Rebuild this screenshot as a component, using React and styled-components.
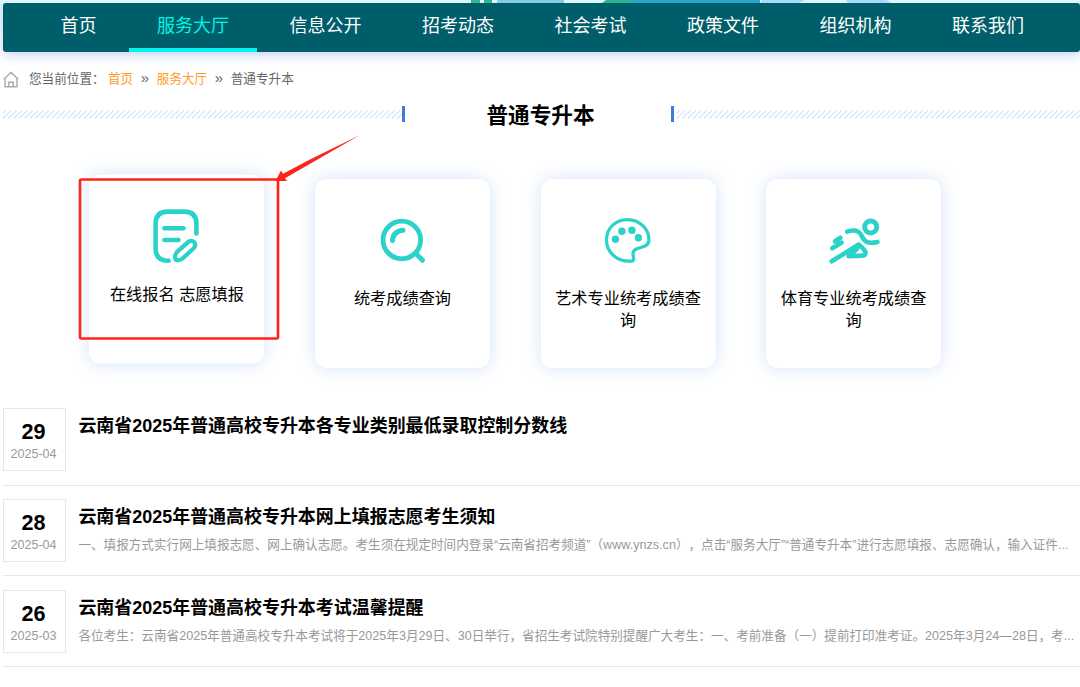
import React from 'react';
import styled, { createGlobalStyle } from 'styled-components';

const GlobalStyle = createGlobalStyle`
  * {
    box-sizing: border-box;
  }

  body {
    margin: 0;
    background: #fff;
    overflow: hidden;
    font-family: 'Liberation Sans', 'Noto Sans CJK SC', sans-serif;
    text-spacing-trim: space-all;
    color: #000;
  }
`;

const Page = styled.div`
  position: relative;
  width: 1080px;
  height: 687px;
  overflow: hidden;
`;

const Banner = styled.svg`
  display: block;
`;

const NavShadow = styled.div`
  background: linear-gradient(#e2f6fb, #fff);
  padding-left: 3px;
`;

const Nav = styled.nav`
  display: flex;
  gap: 4.5px;
  height: 49px;
  padding-left: 29.5px;
  background: #005e6b;
  border-radius: 3px;
  box-shadow: 0 3px 12px rgba(60, 110, 210, 0.3);
`;

const NavItem = styled.a`
  padding: 0 28px;
  height: 49px;
  line-height: 47px;
  font-size: 18px;
  white-space: nowrap;
  color: ${props => (props.$active ? '#00f5e6' : '#fff')};
  border-bottom: 4px solid ${props => (props.$active ? '#00f5ee' : 'transparent')};
`;

const Breadcrumb = styled.div`
  display: flex;
  align-items: center;
  height: 20px;
  margin-top: 15px;
  padding-left: 3px;
  font-size: 12.6px;
  color: #666;
  white-space: nowrap;
`;

const HomeIcon = styled.svg`
  margin: 4px 10px 0 0;
`;

const Place = styled.span`
  width: 79px;
`;

const CrumbLink = styled.a`
  color: #ff9c26;
`;

const Separator = styled.span`
  width: 23.6px;
  text-align: center;
  font-size: 15px;
`;

const TitleRow = styled.div`
  display: flex;
  align-items: center;
  height: 32px;
  margin-top: 11px;
  padding-left: 3px;
`;

const Hatch = styled.svg`
  flex: ${props => (props.$width ? 'none' : '1')};
  width: ${props => props.$width || 'auto'};
  height: 9px;
`;

const SectionTitle = styled.h2`
  display: flex;
  align-items: center;
  justify-content: center;
  width: 272px;
  height: 16px;
  margin: 0 3px 0 0;
  padding-left: 5px;
  border: solid #3a7de0;
  border-width: 0 3px;
  font-size: 21.6px;
  line-height: 18px;
  padding-top: 3px;
`;

const CardRow = styled.div`
  display: flex;
  gap: 50.55px;
  margin-top: 48.5px;
  padding-left: 89.45px;
`;

const Card = styled.div`
  width: 175px;
  height: 189.5px;
  padding: 33px 13px 0;
  border-radius: 12px;
  background: #fff;
  box-shadow: 0 0 18px rgba(60, 130, 225, 0.22);
  text-align: center;
  transform: translateY(${props => (props.$raised ? '-4.5px' : '0')});
`;

const CardIcon = styled.svg`
  display: block;
  margin: 0 auto;
  fill: none;
  stroke: #2ad2c9;
  stroke-linecap: round;
  stroke-linejoin: round;
`;

const CardLabel = styled.div`
  margin-top: 15px;
  font-size: 16.2px;
  line-height: 22px;
`;

const NewsList = styled.div`
  margin-top: 40px;
  padding-left: 3px;
`;

const NewsItem = styled.div`
  display: flex;
  height: 90.7px;
  border-bottom: 1px solid #e6e6e6;
  padding-top: 13.3px;

  &:first-child {
    height: 77.7px;
    padding-top: 0;
  }
`;

const DateBox = styled.div`
  width: 63px;
  height: 63px;
  padding-top: 11px;
  border: 1px solid #e6e6e6;
  text-align: center;
`;

const Day = styled.div`
  margin-left: -2px;
  font-size: 21.6px;
  line-height: 24px;
  font-weight: bold;
`;

const Month = styled.div`
  margin-left: -2px;
  font-size: 12.6px;
  line-height: 21px;
  color: #999;
`;

const NewsBody = styled.div`
  flex: 1;
  min-width: 0;
  padding: 5px 3px 0 12.4px;
`;

const NewsTitle = styled.h3`
  margin: 0;
  font-size: 17.97px;
  line-height: 27px;
`;

const Summary = styled.p`
  margin: 4px 0 0;
  font-size: 12.6px;
  line-height: 21px;
  color: #999;
  white-space: nowrap;
  overflow: hidden;
  text-overflow: ellipsis;
`;

const Annotation = styled.svg`
  position: absolute;
  left: 70px;
  top: 130px;
`;

const navItems = ['首页', '服务大厅', '信息公开', '招考动态', '社会考试', '政策文件', '组织机构', '联系我们'];

const FormIcon = () => (
  <CardIcon width="60" height="60" viewBox="5 0.5 60 60" strokeWidth="4.6">
    <path d="M54.4 26.5V17Q54.4 4.6 42.4 4.6H25.6Q13.6 4.6 13.6 17V41.5Q13.6 53.8 26.6 53.8" />
    <path d="M22.4 21.2H41.5M22.4 33H36.4" />
    <path d="M34.6 45.4L46.6 34.6Q49.8 32.8 52.3 35.2Q54.4 38 51.9 41L40.4 51.6Q38.4 53.2 35.4 53.4Q33.1 53.2 33 50.2Q33.1 47 34.6 45.4Z" strokeWidth="4.2" />
  </CardIcon>
);

const SearchIcon = () => (
  <CardIcon width="60" height="60" viewBox="-0.5 0 60 60" strokeWidth="4.8">
    <circle cx="29.3" cy="28" r="18.8" />
    <path d="M43.5 41.6L50 48.2" />
    <path d="M20 28.5Q20.5 19.5 30.5 18.3" strokeWidth="5" />
  </CardIcon>
);

const PaletteIcon = () => (
  <CardIcon width="60" height="60" viewBox="0 0 60 60" strokeWidth="3.2">
    <path d="M35 48.8C19 51 8.5 40 8.5 28C8.5 15.7 18 7.6 29.5 7.6C42 7.6 52 18 50.8 29.5Q50 32.8 46.5 34.2L39 36.8Q34.8 38.3 35 42.2L35.6 46.5Q35.7 48.5 35 48.8Z" />
    <g fill="#2ad2c9" stroke="none">
      <circle cx="17.4" cy="27.3" r="3.7" />
      <circle cx="23.9" cy="19.2" r="3.7" />
      <circle cx="33.9" cy="18.3" r="3.7" />
      <circle cx="40.4" cy="25.8" r="3.7" />
    </g>
  </CardIcon>
);

const RunnerIcon = () => (
  <CardIcon width="60" height="60" viewBox="0 0 60 60" strokeWidth="4.6">
    <circle cx="46.7" cy="15" r="6" strokeWidth="5" />
    <path d="M23.2 19.7C31 17 35 19 37.2 23C40 29 42.5 32.5 53.5 30" />
    <path d="M7.8 49.3L34.7 32.5Q40.7 37.5 41.6 40.5Q41.5 43.5 38.3 43.6L24.6 44.2L33 37" />
    <path d="M8.3 36.2L17.6 30.6M11 29.2L16.4 25.7" />
  </CardIcon>
);

const cards = [
  { label: '在线报名 志愿填报', Icon: FormIcon, raised: true },
  { label: '统考成绩查询', Icon: SearchIcon },
  { label: '艺术专业统考成绩查询', Icon: PaletteIcon },
  { label: '体育专业统考成绩查询', Icon: RunnerIcon },
];

const news = [
  { day: '29', month: '2025-04', title: '云南省2025年普通高校专升本各专业类别最低录取控制分数线' },
  {
    day: '28',
    month: '2025-04',
    title: '云南省2025年普通高校专升本网上填报志愿考生须知',
    summary: '一、填报方式实行网上填报志愿、网上确认志愿。考生须在规定时间内登录“云南省招考频道”（www.ynzs.cn），点击“服务大厅”“普通专升本”进行志愿填报、志愿确认，输入证件...',
  },
  {
    day: '26',
    month: '2025-03',
    title: '云南省2025年普通高校专升本考试温馨提醒',
    summary: '各位考生：云南省2025年普通高校专升本考试将于2025年3月29日、30日举行，省招生考试院特别提醒广大考生：一、考前准备（一）提前打印准考证。2025年3月24—28日，考...',
  },
];

const Stripes = ({ id, width }) => (
  <Hatch $width={width}>
    <defs>
      <pattern id={id} width="5.4" height="9" patternUnits="userSpaceOnUse">
        <path d="M0 8.5L8 0.5M-5.4 8.5L2.6 0.5" stroke="#c3daf8" strokeWidth="1" />
      </pattern>
    </defs>
    <rect width="100%" height="9" fill={`url(#${id})`} />
  </Hatch>
);

const App = () => {
  return (
    <Page>
      <GlobalStyle />
      <Banner width="1080" height="3" viewBox="0 0 1080 3">
        <rect width="1080" height="3" fill="#dcf6fb" />
        <path d="M471 0h9v3h-9zM484 0h8v3h-8z" fill="#2db89b" />
        <path d="M497 0h67v3h-67z" fill="#86cbe6" />
        <path d="M606 0h34l-8 3h-30z" fill="#2db38f" />
        <path d="M635 0h125v3H628z" fill="#2aa5d2" />
        <path d="M762 0h43l-6 3h-39zM846 0h40l6 3h-44z" fill="#a8d8fa" />
      </Banner>
      <NavShadow>
        <Nav>
          {navItems.map(item => (
            <NavItem key={item} $active={item === '服务大厅'}>{item}</NavItem>
          ))}
        </Nav>
      </NavShadow>
      <Breadcrumb>
        <HomeIcon width="16" height="17" viewBox="0 0 16 17" fill="none" stroke="#aaa" strokeWidth="1.4" strokeLinejoin="round">
          <path d="M0.8 8.2L8 1.2L15.2 8.2M2 7.5V15.7H14V7.5M5.8 15.5V11.2H10.2V15.5" />
        </HomeIcon>
        <Place>您当前位置：</Place>
        <CrumbLink>首页</CrumbLink>
        <Separator>»</Separator>
        <CrumbLink>服务大厅</CrumbLink>
        <Separator>»</Separator>
        <span>普通专升本</span>
      </Breadcrumb>
      <TitleRow>
        <Stripes id="hatch-left" width="399px" />
        <SectionTitle>普通专升本</SectionTitle>
        <Stripes id="hatch-right" />
      </TitleRow>
      <CardRow>
        {cards.map(({ label, Icon, raised }) => (
          <Card key={label} $raised={raised}>
            <Icon />
            <CardLabel>{label}</CardLabel>
          </Card>
        ))}
      </CardRow>
      <NewsList>
        {news.map(item => (
          <NewsItem key={item.title}>
            <DateBox>
              <Day>{item.day}</Day>
              <Month>{item.month}</Month>
            </DateBox>
            <NewsBody>
              <NewsTitle>{item.title}</NewsTitle>
              {item.summary && <Summary>{item.summary}</Summary>}
            </NewsBody>
          </NewsItem>
        ))}
      </NewsList>
      <Annotation width="300" height="220" viewBox="0 0 300 220">
        <rect x="10" y="49.5" width="198" height="159" rx="1.5" fill="none" stroke="#ff2419" strokeWidth="2.6" />
        <path d="M290 5L240 29.5L213 43.8L211 40.5L205.5 51L217 51L215 48.3L241 33.3Z" fill="#ff2419" />
      </Annotation>
    </Page>
  );
};

export default App;
